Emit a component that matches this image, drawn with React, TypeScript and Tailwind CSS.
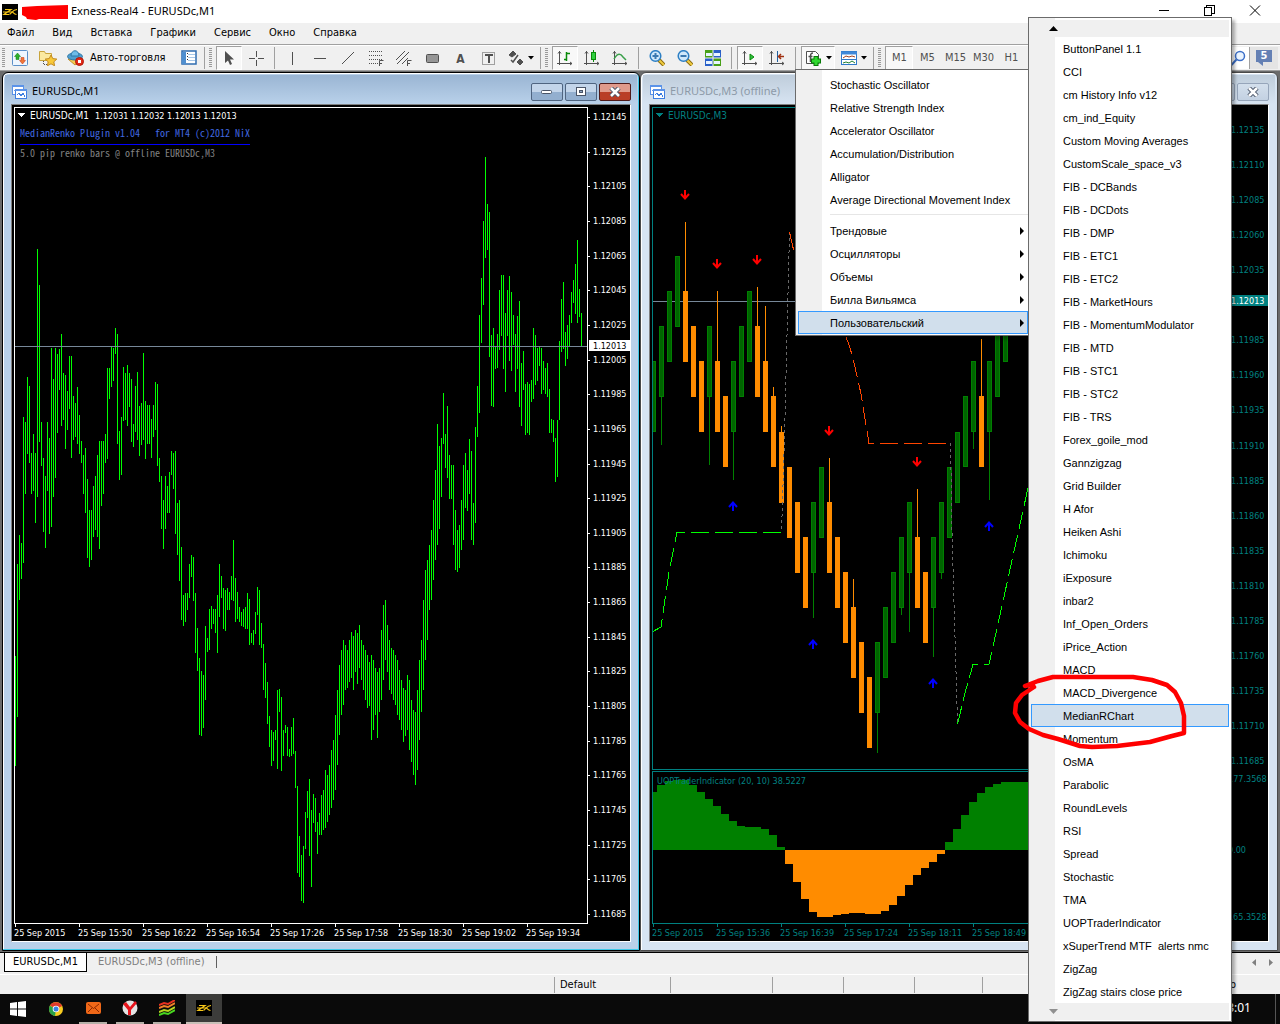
import React from 'react';
import clsx from 'clsx';

const UI = "font-['DejaVu_Sans_Condensed',sans-serif]";
const TITLE = "font-['Noto_Sans',sans-serif]";
const MENU = "font-['Liberation_Sans',sans-serif]";

const menuBar = ['Файл', 'Вид', 'Вставка', 'Графики', 'Сервис', 'Окно', 'Справка'];

const indicators = [
  'Stochastic Oscillator',
  'Relative Strength Index',
  'Accelerator Oscillator',
  'Accumulation/Distribution',
  'Alligator',
  'Average Directional Movement Index',
];

const groups = ['Трендовые', 'Осцилляторы', 'Объемы', 'Билла Вильямса', 'Пользовательский'];

const custom = [
  'ButtonPanel 1.1', 'CCI', 'cm History Info v12', 'cm_ind_Equity', 'Custom Moving Averages',
  'CustomScale_space_v3', 'FIB - DCBands', 'FIB - DCDots', 'FIB - DMP', 'FIB - ETC1', 'FIB - ETC2',
  'FIB - MarketHours', 'FIB - MomentumModulator', 'FIB - MTD', 'FIB - STC1', 'FIB - STC2', 'FIB - TRS',
  'Forex_goile_mod', 'Gannzigzag', 'Grid Builder', 'H Afor', 'Heiken Ashi', 'Ichimoku', 'iExposure',
  'inbar2', 'Inf_Open_Orders', 'iPrice_Action', 'MACD', 'MACD_Divergence', 'MedianRChart', 'Momentum',
  'OsMA', 'Parabolic', 'RoundLevels', 'RSI', 'Spread', 'Stochastic', 'TMA', 'UOPTraderIndicator',
  'xSuperTrend MTF  alerts nmc', 'ZigZag', 'ZigZag stairs close price',
];

// high/low of every M1 bar, two pixels apart
const m1Bars = `656-766 564-717 535-600 543-579 417-563 422-494 377-454 386-463 453-494 434-491 453-523 249-497
285-442 422-466 458-532 476-548 422-491 438-534 348-527 379-497 348-478 354-433 349-390 334-426 373-420 375-449
391-430 356-409 356-458 396-440 403-437 387-444 415-454 441-463 455-494 448-513 479-558 510-567 510-560 486-537
476-530 455-537 441-549 441-506 441-494 434-463 368-459 368-399 346-387 348-381 328-354 334-444 431-480 417-475
367-421 373-420 365-426 373-407 379-442 424-447 386-432 372-440 406-456 403-445 353-440 401-459 405-444 405-444
419-458 405-437 382-430 384-466 458-482 476-529 500-549 476-529 486-513 472-513 451-475 453-489 451-534 503-555
500-581 547-620 595-626 593-622 593-610 564-598 555-577 557-601 593-653 628-671 658-735 671-736 675-728 626-700
638-652 609-650 606-629 609-624 609-633 595-653 564-617 576-598 588-629 590-631 588-610 592-610 576-600 540-601
578-622 592-619 607-622 612-626 609-627 607-629 593-629 599-645 633-643 630-645 612-634 587-615 590-645 623-648
644-690 663-698 682-724 716-747 730-766 732-761 730-740 690-769 689-712 697-771 730-756 725-733 727-756 749-757
727-756 718-754 751-788 786-873 836-877 855-901 846-903 812-849 791-818 779-856 810-887 794-823 798-832 822-854
813-835 795-835 790-830 770-828 775-822 765-815 750-808 740-800 715-790 690-765 665-735 650-715 640-705 645-690
650-688 640-682 632-678 636-690 630-672 633-684 625-668 640-680 645-690 650-700 655-708 662-706 655-740 660-730
668-715 672-738 668-712 630-700 605-680 600-660 625-672 640-690 648-694 650-700 655-705 660-715 670-720 680-730
688-742 690-736 675-730 680-750 700-762 710-775 712-785 690-770 660-740 640-712 600-690 570-660 560-640 545-610
530-600 500-580 470-560 424-545 446-529 438-497 393-444 434-468 406-478 455-499 465-499 465-545 510-570 530-572
525-568 500-550 465-540 453-508 470-511 439-494 451-540 503-545 427-523 386-437 315-413 278-343 221-305 157-258
204-250 212-357 335-406 328-407 346-369 334-368 290-350 275-336 275-369 313-392 290-336 276-361 292-371 315-345
334-392 316-369 301-407 363-426 351-390 384-435 382-433 384-435 380-402 328-399 335-385 348-381 346-366 348-394
361-390 368-394 363-397 389-433 419-433 420-442 438-482 420-477 341-420 299-352 282-349 332-366 325-359 315-347
292-323 280-303 264-314 240-323 289-317 313-347`
  .split(/\s+/)
  .map((bar) => bar.split('-').map(Number));

// renko bricks: [direction, level, wick top, wick bottom]
const bricks: [string, number, number?, number?][] = [
  ['u', 3], ['u', 2, 0, 445], ['u', 1], ['u', 0], ['d', 1, 222], ['d', 2], ['d', 3], ['u', 2, 0, 465],
  ['d', 3, 291], ['d', 4], ['u', 3, 0, 480], ['u', 2], ['u', 1], ['d', 2, 287], ['d', 3, 306],
  ['d', 4, 387], ['d', 5, 426], ['d', 6], ['d', 7], ['d', 8], ['u', 7, 0, 618], ['u', 6],
  ['d', 7, 458], ['d', 8], ['d', 9], ['d', 10, 579], ['d', 11], ['d', 12], ['u', 11, 0, 753],
  ['u', 10], ['u', 9], ['u', 8, 0, 615], ['u', 7, 0, 632], ['d', 8, 489], ['d', 9], ['u', 8, 0, 657],
  ['u', 7, 0, 579], ['u', 6], ['u', 5], ['u', 4], ['u', 3, 0, 449], ['d', 4, 339], ['u', 3, 0, 500],
  ['u', 2], ['u', 1], ['u', 0], ['u', 0],
];

const histogram = [
  792, 785, 781, 780, 780, 785, 792, 799, 806, 814, 821, 826, 827, 827, 829, 835, 847, 864, 882, 899, 912,
  917, 917, 915, 914, 913, 913, 914, 914, 911, 905, 896, 885, 875, 868, 862, 854, 842, 829, 815, 802, 793,
  787, 784, 782, 782, 782, 782,
];

const m1Times = ['2015', '15:50', '16:22', '16:54', '17:26', '17:58', '18:30', '19:02', '19:34'];
const m3Times = ['2015', '15:36', '16:39', '17:24', '18:11', '18:49'];

const sells = [[685, 195], [717, 264], [757, 260], [829, 431], [917, 462]];
const buys = [[733, 506], [813, 644], [933, 683], [989, 526]];

const price = (value: number) => (value / 100000).toFixed(5);

const ChartM1 = () => (
  <svg className={clsx('block w-full flex-1 bg-black text-[9px]', UI)} shapeRendering="crispEdges">
    <g transform="translate(-12 -105)">
      {m1Bars.map(([high, low], i) => (
        <rect key={i} x={15 + i * 2} y={high} width="1" height={low - high} fill="#00ff00" />
      ))}
      <path d="M14 346.5H588" stroke="#778899" />
      <path d="M14.5 923.5V107.5H587.5V923.5Z" fill="none" stroke="#fff" />
      <g fill="#fff">
        {Array.from({ length: 24 }, (_, i) => {
          const y = Math.round(117 + i * 34.65);
          return (
            <React.Fragment key={i}>
              <rect x="588" y={y} width="2" height="1" />
              <text x="593" y={y + 3}>{price(112145 - i * 20)}</text>
            </React.Fragment>
          );
        })}
        {m1Times.map((time, i) => (
          <React.Fragment key={time}>
            <rect x={15 + i * 64} y="924" width="1" height="3" />
            <text x={14 + i * 64} y="936">25 Sep {time}</text>
          </React.Fragment>
        ))}
        <rect x="589" y="340" width="42" height="11" />
        <path d="M18 113h7l-3.500 4z" />
        <text x="30" y="119" className="text-[10px]">EURUSDc,M1</text>
        <text x="95" y="119" className="whitespace-pre">1.12031 1.12032 1.12013 1.12013</text>
      </g>
      <text x="593" y="349" fill="#000">1.12013</text>
      <g className="font-['Noto_Sans_Mono_CJK_SC',monospace] text-[10px]">
        <text x="20" y="137" fill="#4169e1" className="whitespace-pre">
          {'MedianRenko Plugin v1.04   for MT4 (c)2012 NiX'}
        </text>
        <text x="20" y="157" fill="#808080">5.0 pip renko bars @ offline EURUSDc,M3</text>
      </g>
      <rect x="20" y="144" width="230" height="1" fill="#0000ff" />
    </g>
  </svg>
);

const ChartM3 = () => (
  <svg className={clsx('block w-full flex-1 bg-black text-[9px]', UI)} shapeRendering="crispEdges">
    <g transform="translate(-650 -105)">
      <path d="M652 301.500H1228" stroke="#778899" />
      {bricks.map(([dir, level, top, bottom], i) => {
        const x = 653 + i * 8;
        const y = Math.round(256 + level * 35.1);
        const up = dir === 'u';
        return (
          <g key={i} fill={up ? '#008000' : '#ff8c00'}>
            {top ? <rect x={x} y={top} width="1" height={y - top} /> : null}
            {bottom ? <rect x={x} y={y} width="1" height={bottom - y} /> : null}
            <rect x={x - 2} y={y} width="5" height="71" />
            {up && <rect x={x - 1} y={y + 1} width="3" height="69" fill="#006400" />}
          </g>
        );
      })}
      <rect x="650" y="350" width="2" height="90" fill="#000" />
      <g fill="none">
        <path d="M789.500 232L784.500 438L781.500 532M950.500 443L952 532L957.500 724" stroke="#696969" strokeDasharray="3 3" />
        <path d="M789.500 232L794 252L800 270M846 337L849 345L853 358L861 394L869 443.500H950" stroke="#ff4500" strokeDasharray="18 6" />
        <path d="M652 632L661 627L669 572L677 532.500H782M957.500 724L965 693L973 664.500H989L1028 488" stroke="#00ff00" strokeDasharray="18 6" />
      </g>
      <g shapeRendering="auto" strokeWidth="2" fill="none">
        {sells.map(([x, y]) => (
          <path key={x} d={`M${x} ${y - 5}v9M${x - 4} ${y - 1}l4 4.500l4 -4.500`} stroke="#ff0000" />
        ))}
        {buys.map(([x, y]) => (
          <path key={x} d={`M${x} ${y + 5}v-9M${x - 4} ${y + 1}l4 -4.500l4 4.500`} stroke="#0000ff" />
        ))}
      </g>
      {histogram.map((y, i) => (
        <rect
          key={i}
          x={649 + i * 8}
          y={Math.min(y, 850)}
          width="8"
          height={Math.abs(850 - y)}
          fill={y < 850 ? '#008000' : '#ff8c00'}
        />
      ))}
      <rect x="649" y="772" width="3" height="150" fill="#000" />
      <g fill="none" stroke="#008080">
        <path d="M652.500 769.500V107.500H1228.500V769.500Z" />
        <path d="M652.500 923.500V771.500H1228.500V923.500Z" />
      </g>
      <g fill="#008080">
        {Array.from({ length: 19 }, (_, i) =>
          i === 5 ? null : (
            <text key={i} x="1231" y={Math.round(133 + i * 35.060)}>{price(112135 - i * 25)}</text>
          ),
        )}
        <rect x="1230" y="295" width="39" height="11" />
        <text x="1231" y="304" fill="#fff">1.12013</text>
        <text x="1228" y="782">177.3568</text>
        <text x="1228" y="853">0.00</text>
        <text x="1225" y="920">-165.3528</text>
        {m3Times.map((time, i) => (
          <React.Fragment key={time}>
            <rect x={653 + i * 64} y="924" width="1" height="3" />
            <text x={652 + i * 64} y="936">25 Sep {time}</text>
          </React.Fragment>
        ))}
        <path d="M656 113h7l-3.500 4z" />
        <text x="668" y="119" className="text-[10px]">EURUSDc,M3</text>
        <text x="657" y="784">UOPTraderIndicator (20, 10) 38.5227</text>
      </g>
    </g>
  </svg>
);

const ChartIcon = () => (
  <svg width="15" height="14" viewBox="0 0 15 14" shapeRendering="crispEdges">
    <rect x=".5" y=".5" width="11" height="9" fill="#fff" stroke="#5b93e8" />
    <path d="M0 1h12" stroke="#5b93e8" strokeWidth="2" />
    <path d="M2 6l2-2 2 2 2-2" stroke="#5b93e8" fill="none" />
    <rect x="3.500" y="4.500" width="11" height="9" fill="#fff" stroke="#3f7fe0" />
    <path d="M3 5h12" stroke="#5b93e8" strokeWidth="2" />
    <path d="M5 10l2-2 2 3 2-3 2 4" stroke="#3f7fe0" fill="none" />
  </svg>
);

const winButton = 'flex h-[18px] w-8 items-center justify-center rounded-xs border';

const WindowButtons = ({ active }: { active: boolean }) => {
  const tone = active
    ? 'border-[#4f6480] bg-linear-to-b from-[#c3d5ea] from-50% to-[#93afcf] to-50%'
    : 'border-[#96a5ba] bg-linear-to-b from-[#d3dfec] to-[#c3d1e2]';
  return (
    <div className="flex gap-0.5">
      <button className={clsx(winButton, tone)} aria-label="Minimize">
        <svg width="12" height="6" viewBox="0 0 12 6">
          <rect x=".5" y="1.500" width="10" height="3" rx="1" fill="#fff" stroke="#4a5568" />
        </svg>
      </button>
      <button className={clsx(winButton, tone)} aria-label="Maximize">
        <svg width="12" height="10" viewBox="0 0 12 10" shapeRendering="crispEdges">
          <rect x="1.500" y=".5" width="9" height="8" fill="#fff" stroke="#4a5568" />
          <rect x="4.500" y="3.500" width="3" height="2" fill="#8fa6c2" stroke="#4a5568" />
        </svg>
      </button>
      <button
        aria-label="Close"
        className={clsx(
          winButton,
          active ? 'border-[#4f1a1a] bg-linear-to-b from-[#e09a8c] from-50% to-[#b93d27] to-50%' : tone,
        )}
      >
        <svg width="12" height="10" viewBox="0 0 12 10">
          <path d="M2 1l8 8M10 1l-8 8" stroke="#4a5568" strokeWidth="4.500" />
          <path d="M2 1l8 8M10 1l-8 8" stroke="#fff" strokeWidth="2.500" />
        </svg>
      </button>
    </div>
  );
};

type ChartWindowProps = { title: string; active: boolean; children: React.ReactNode };

const ChartWindow = ({ title, active, children }: ChartWindowProps) => (
  <section
    className={clsx(
      'flex min-w-0 flex-1 flex-col rounded-t-md border px-2 pb-2',
      active
        ? 'border-black bg-[#b9d1ea] shadow-[inset_-1px_-1px_0_#3fc8e8,inset_1px_1px_0_#fff]'
        : 'border-[#4a4a4a] bg-[#d7e4f2] shadow-[inset_1px_1px_0_#fff]',
    )}
  >
    <header
      className={clsx(
        '-mx-1.5 mt-0.5 flex h-[29px] items-center bg-linear-to-b px-1.5 pt-1',
        active ? 'from-[#9ab5d3] to-[#b9d1ea]' : 'from-[#bfcddb] to-[#d7e4f2]',
      )}
    >
      <span className="ml-px">
        <ChartIcon />
      </span>
      <h2 className={clsx('ml-[5px] flex-1 text-[11px]', TITLE, active ? 'text-black' : 'text-[#8d9aa8]')}>{title}</h2>
      <WindowButtons active={active} />
    </header>
    <div className="flex flex-1 flex-col border border-t-[#808080] border-r-white border-b-white border-l-[#808080]">
      {children}
    </div>
  </section>
);

type ToolProps = { label: string; pressed?: boolean; className?: string; children: React.ReactNode };

const Tool = ({ label, pressed, className = 'w-7', children }: ToolProps) => (
  <button
    aria-label={label}
    className={clsx(
      'flex h-6 shrink-0 items-center justify-center text-[11px] text-[#505050]',
      pressed && 'border border-t-[#a0a0a0] border-r-white border-b-white border-l-[#a0a0a0] bg-[#f8f8f8]',
      className,
    )}
  >
    {children}
  </button>
);

const Icon = ({ w = 16, children }: { w?: number; children: React.ReactNode }) => (
  <svg width={w} height="16" viewBox={`0 0 ${w} 16`} fill="none" stroke="#505050">
    {children}
  </svg>
);

const Handle = () => (
  <span className="mx-1 h-5 w-[3px] shrink-0 bg-[repeating-linear-gradient(to_bottom,#9a9a9a_0_1px,transparent_1px_2px)]" />
);
const Divider = () => <span className="block h-[22px] w-px shrink-0 bg-[#a0a0a0]" />;

const Axes = () => <path d="M2.500 1v14M0 13.500h15M1 3.500l1.500-2 1.500 2M13 12l2 1.500-2 1.500" />;

const Lens = ({ plus }: { plus?: boolean }) => (
  <Icon>
    <path d="M10 10l5 5" stroke="#8a6a10" strokeWidth="4" />
    <path d="M10 10l5 5" stroke="#f0cc40" strokeWidth="2" />
    <circle cx="6.500" cy="6" r="5.300" fill="#cfe8fb" stroke="#2d7fc4" strokeWidth="1.500" />
    <path d={plus ? 'M3.500 6h6M6.500 3v6' : 'M3.500 6h6'} stroke="#3a78b0" strokeWidth="2" />
  </Icon>
);

const Caret = () => (
  <svg width="6" height="4" viewBox="0 0 6 4" className="ml-1">
    <path d="M0 0h6l-3 3.500z" fill="#000" />
  </svg>
);

const Toolbar = () => (
  <div className={clsx('flex h-[25px] items-center overflow-hidden border-t border-white bg-[#f0f0f0]', UI)}>
    <span className="ml-0.5 h-5 w-[3px] shrink-0 bg-[repeating-linear-gradient(to_bottom,#9a9a9a_0_1px,transparent_1px_2px)]" />
    <Tool label="Новый ордер" className="ml-0.5 w-[26px]">
      <Icon>
        <rect x=".5" y=".5" width="15" height="15" rx="1" fill="#eef6ff" stroke="#5b8fc8" />
        <path d="M5.500 3l3 3.500h-1.500v3h-3v-3h-1.500z" fill="#2cb02c" stroke="#0a7a0a" strokeWidth=".5" />
        <path d="M10.500 14l3-3.500h-1.500v-3h-3v3h-1.500z" fill="#f07838" stroke="#c83010" strokeWidth=".5" />
      </Icon>
    </Tool>
    <Tool label="Избранное" className="w-[29px]">
      <Icon w={18}>
        <path d="M.5 1.500h5l1 2h6v7h-12z" fill="#fbe9a0" stroke="#c8a43c" />
        <path d="M4.500 11v4M5 14.500h3" strokeDasharray="1 1" />
        <path d="M12 5l1.800 3.600 4 .5-3 2.700.8 4-3.600-2-3.600 2 .8-4-3-2.700 4-.5z" fill="#f8c838" stroke="#c08820" />
      </Icon>
    </Tool>
    <button className="flex h-6 shrink-0 items-center gap-1.5 pl-[5px] text-[11px] whitespace-nowrap text-black">
      <Icon w={17}>
        <path d="M1 9l7 6 7-6z" fill="#f5cc50" stroke="#c09030" />
        <ellipse cx="8" cy="6.500" rx="7.500" ry="3.500" fill="#4f9fd0" stroke="#2f78a8" />
        <path d="M4 6c0-7 8-7 8 0z" fill="#6fbce8" stroke="#2f78a8" />
        <circle cx="12.500" cy="11.500" r="4" fill="#e02818" stroke="#b01808" />
        <rect x="11" y="10" width="3" height="3" fill="#fff" stroke="none" />
      </Icon>
      Авто-торговля
    </button>
    <Tool label="Окно данных" className="ml-2 w-[31px]">
      <Icon>
        <rect x="1" y="1" width="14" height="13" fill="#fff" stroke="#2f6cb0" strokeWidth="1.500" />
        <rect x="1" y="2" width="4" height="12" fill="#4f8fd0" stroke="none" />
        <path d="M7 4.500h7M7 7.500h7M7 10.500h7" stroke="#a8c8e8" />
        <path d="M6.500 3v9" stroke="#303030" strokeDasharray="1 2" />
      </Icon>
    </Tool>
    <Divider />
    <Handle />
    <Tool label="Курсор" pressed className="w-[26px]">
      <Icon>
        <path d="M4 1v12l3-2.500 2 4.500 2-1-2-4.500h4z" fill="#505050" stroke="none" />
      </Icon>
    </Tool>
    <Tool label="Перекрестие">
      <Icon>
        <path d="M8.500 1v6M8.500 10v6M1 8.500h6M10 8.500h6" />
      </Icon>
    </Tool>
    <span className="ml-1">
      <Divider />
    </span>
    <Tool label="Вертикальная линия" className="ml-[3px] w-7">
      <Icon><path d="M8.500 2v13" /></Icon>
    </Tool>
    <Tool label="Горизонтальная линия">
      <Icon><path d="M2 8.500h12" /></Icon>
    </Tool>
    <Tool label="Трендовая линия">
      <Icon><path d="M2 14L14 2" /></Icon>
    </Tool>
    <Tool label="Фибоначчи">
      <Icon>
        <path d="M1 1.500h14M1 5.500h14M1 9.500h14M1 13.500h9" strokeDasharray="1 1" />
        <path d="M11.500 16v-5.500h4M11 13.500h3" />
      </Icon>
    </Tool>
    <Tool label="Канал">
      <Icon>
        <path d="M0 10L9 1M1 14L13 2M6 14L12 8" />
        <path d="M11.500 16v-5.500h4M11 13.500h3" />
      </Icon>
    </Tool>
    <Tool label="Прямоугольник">
      <Icon><rect x="2.500" y="4.500" width="12" height="8" rx="1" fill="#969696" /></Icon>
    </Tool>
    <Tool label="Текст" className="w-7 pt-0.5">
      <span className="text-[12px] font-bold">A</span>
    </Tool>
    <Tool label="Метка">
      <Icon>
        <rect x="2.500" y="2.500" width="12" height="12" strokeDasharray="1 1" />
        <path d="M5 5h8M9 5v8" strokeWidth="2" />
      </Icon>
    </Tool>
    <Tool label="Стрелки" className="w-[38px]">
      <Icon>
        <path d="M1 5l4-4 3 3-4 3zM9 12l3-3 3 3-3 3z" fill="#505050" />
        <path d="M3 10l2 2 5-7" strokeWidth="1.500" />
      </Icon>
      <Caret />
    </Tool>
    <Divider />
    <Handle />
    <Tool label="Бары" pressed className="w-[26px]">
      <Icon>
        <Axes />
        <path d="M9.500 2v9M7 9.500h2M10 3.500h3" stroke="#0a8a0a" strokeWidth="1.500" />
      </Icon>
    </Tool>
    <Tool label="Свечи">
      <Icon>
        <Axes />
        <path d="M9.500 0v12" stroke="#0a8a0a" />
        <rect x="7.500" y="2.500" width="4" height="7" fill="#30d040" stroke="#0a8a0a" />
      </Icon>
    </Tool>
    <Tool label="Линия">
      <Icon>
        <Axes />
        <path d="M2 9c4-7 7-5 9-2l3 3" stroke="#3aa04a" strokeWidth="1.500" />
      </Icon>
    </Tool>
    <span className="ml-1">
      <Divider />
    </span>
    <Tool label="Увеличить" className="ml-1 w-7"><Lens plus /></Tool>
    <Tool label="Уменьшить"><Lens /></Tool>
    <Tool label="Расположить окна">
      <Icon>
        <rect width="7.500" height="7.500" fill="#48a018" stroke="none" />
        <rect x="8.500" width="7.500" height="7.500" fill="#2a60c8" stroke="none" />
        <rect y="8.500" width="7.500" height="7.500" fill="#2a60c8" stroke="none" />
        <rect x="8.500" y="8.500" width="7.500" height="7.500" fill="#48a018" stroke="none" />
        <path d="M1 4.500h6M9 4.500h6M1 12.500h6M9 12.500h6" stroke="#e8f4ff" strokeWidth="3" />
      </Icon>
    </Tool>
    <span className="ml-1">
      <Divider />
    </span>
    <Tool label="Автопрокрутка" pressed className="ml-[5px] w-[26px]">
      <Icon>
        <Axes />
        <path d="M8 4v6l4-3z" fill="#30c040" stroke="#0a8a0a" />
      </Icon>
    </Tool>
    <Tool label="Сдвиг графика">
      <Icon>
        <Axes />
        <path d="M8.500 1v11" stroke="#2060a0" />
        <path d="M15 6.500h-5M12 4l-2.500 2.500L12 9" stroke="#a03010" strokeWidth="1.500" />
      </Icon>
    </Tool>
    <span className="ml-1">
      <Divider />
    </span>
    <Tool label="Индикаторы" pressed className="ml-[5px] w-[34px]">
      <Icon w={17}>
        <path d="M1.500 1.500h9l3 3v9h-12z" fill="#fff" />
        <path d="M8 3c-3 0-2.500 2-2.500 9M3.500 6.500h4" strokeWidth="1.500" />
        <path d="M11 6v10M6 11h10" stroke="#087a08" strokeWidth="5" />
        <path d="M11 7v8M7 11h8" stroke="#30d830" strokeWidth="3" />
      </Icon>
      <Caret />
    </Tool>
    <Tool label="Шаблоны" className="w-[38px]">
      <Icon>
        <rect x=".5" y="1.500" width="15" height="13" fill="#fff" stroke="#2f78c8" />
        <path d="M0 3h16" stroke="#3f88d8" strokeWidth="3" />
        <path d="M2 8l3-2 3 1 3-1 3 1" stroke="#a04020" />
        <path d="M1 9.500h14" stroke="#2f78c8" />
        <path d="M2 13l3-1 3 1 3-2 3 2" stroke="#208030" />
      </Icon>
      <Caret />
    </Tool>
    <Divider />
    <Handle />
    {['M1', 'M5', 'M15', 'M30', 'H1', 'H4'].map((frame) => (
      <Tool key={frame} label={frame} pressed={frame === 'M1'}>
        {frame}
      </Tool>
    ))}
    <div className="ml-auto flex h-6 shrink-0 items-center">
      <span className="flex h-[22px] w-10 items-center justify-end border-r border-[#a0a0a0] bg-white pr-[3px]">
        <Icon>
          <circle cx="10" cy="6" r="4.500" fill="#eaf4ff" stroke="#3c6fc8" strokeWidth="1.500" />
          <path d="M6.500 9.500L1.500 15" stroke="#3c6fc8" strokeWidth="2" />
        </Icon>
      </span>
      <button aria-label="Сообщения" className="mr-0.5 flex h-[22px] w-7 flex-col items-center bg-[#e4e4e4] pt-[3px]">
        <span className="flex h-3 w-4 items-center justify-center bg-[#6480b4] text-[11px] font-bold text-white">5</span>
        <svg width="16" height="4" viewBox="0 0 16 4">
          <path d="M2 0h5v4z" fill="#6480b4" />
        </svg>
      </button>
    </div>
  </div>
);

const menuBox =
  'absolute flex flex-col border border-[#6b6b6b] bg-[linear-gradient(to_right,#f0f0f0_26px,#fff_26px)] px-0.5 pb-px text-[11px] shadow-[3px_3px_3px_rgba(0,0,0,0.3)]';

type MenuItemProps = { label: string; selected?: boolean; arrow?: boolean };

const MenuItem = ({ label, selected, arrow }: MenuItemProps) => (
  <button
    role="menuitem"
    className={clsx(
      'flex h-[23px] shrink-0 items-center border pl-[31px] text-left whitespace-pre',
      selected ? 'border-[#3399ff] bg-[#d1dfec]' : 'border-transparent',
    )}
  >
    <span className="flex-1 pt-px">{label}</span>
    {arrow && (
      <svg width="5" height="8" viewBox="0 0 5 8" className="mr-0.5">
        <path d="M0 0v8l4-4z" />
      </svg>
    )}
  </button>
);

const Logo = () => (
  <svg width="16" height="16" viewBox="0 0 16 16" fill="none" stroke="#f5c518">
    <rect width="16" height="16" fill="#000" stroke="none" />
    <path d="M3 5.500h6L2 10.500h5M1 8h9" strokeWidth="1.200" />
    <path d="M15 5.500c-4 0-4.500 2.500-7.500 5M10 8c1.500 0 1.500 2.500 4.500 2.500" strokeWidth="1.200" />
  </svg>
);

const TitleBar = () => (
  <header className="flex h-[23px] items-center bg-white pl-0.5">
    <Logo />
    <svg width="48" height="16" viewBox="0 0 48 16" className="ml-1">
      <path d="M0 3l15-1 31-1v14H17l-3 1-9-1-1-2-4-2z" fill="#ff0000" />
    </svg>
    <h1 className={clsx('ml-px flex-1 text-[11px] text-black', TITLE)}>Exness-Real4 - EURUSDc,M1</h1>
    <div className="mr-[19px] flex items-center gap-[34px] pb-[3px]">
      <button aria-label="Свернуть">
        <svg width="11" height="11" viewBox="0 0 11 11"><path d="M0 5.500h10" stroke="#000" /></svg>
      </button>
      <button aria-label="Восстановить">
        <svg width="11" height="11" viewBox="0 0 11 11" fill="none" stroke="#000" shapeRendering="crispEdges">
          <path d="M.5 2.500h7v8h-7zM2.500 2V.5h8v8H8" />
        </svg>
      </button>
      <button aria-label="Закрыть">
        <svg width="12" height="11" viewBox="0 0 12 11"><path d="M1 .5l10 10M11 .5l-10 10" stroke="#000" /></svg>
      </button>
    </div>
  </header>
);

const taskSlot = 'flex h-full items-center justify-center border-b-2';

const Taskbar = () => (
  <footer className="flex h-[30px] items-stretch bg-[#0a0a0a]">
    <button aria-label="Пуск" className="flex w-9 items-center justify-center">
      <svg width="16" height="16" viewBox="0 0 16 16" fill="#fff">
        <path d="M0 2l7-1v6.500H0zM8 1l8-1v7.500H8zM0 8.500h7V15l-7-1zM8 8.500h8V16l-8-1z" />
      </svg>
    </button>
    <button aria-label="Chrome" className="ml-0.5 flex w-9 items-center justify-center">
      <svg width="14" height="14" viewBox="0 0 14 14">
        <circle cx="7" cy="7" r="7" fill="#f8cc20" />
        <path d="M7 7L1 3.500A7 7 0 0 1 13.200 4z" fill="#e03a2c" />
        <path d="M7 7L.8 3.800A7 7 0 0 0 6 14z" fill="#28a048" />
        <circle cx="7" cy="7" r="3.300" fill="#fff" />
        <circle cx="7" cy="7" r="2.500" fill="#3a80e0" />
      </svg>
    </button>
    <button aria-label="Почта" className={clsx(taskSlot, 'ml-[5px] w-7 border-[#b5b0a8]')}>
      <svg width="15" height="12" viewBox="0 0 15 12" fill="none" stroke="#8a2800">
        <rect width="15" height="12" rx="2" fill="#f06818" stroke="none" />
        <path d="M2 2l5.500 4.500L13 2M2 10l4-4M13 10L9 6" />
      </svg>
    </button>
    <button aria-label="Яндекс" className={clsx(taskSlot, 'ml-[9px] w-7 border-[#b5b0a8]')}>
      <svg width="16" height="16" viewBox="0 0 16 16">
        <circle cx="8" cy="8" r="7.500" fill="#e4e4e4" />
        <path d="M1 4l5 6v5h3v-5l6-7-2-2-5 6-4-5z" fill="#e8141c" />
      </svg>
    </button>
    <button aria-label="График" className={clsx(taskSlot, 'ml-[9px] w-7 border-[#b5b0a8]')}>
      <svg width="16" height="16" viewBox="0 0 16 16" fill="none" strokeWidth="2">
        <path d="M0 5l5-2 4 1 7-4" stroke="#e83020" />
        <path d="M0 8l5-2 4 1 7-4" stroke="#f08028" />
        <path d="M0 12l5-2 4 1 7-4" stroke="#b8d820" />
        <path d="M0 15l5-2 4 1 7-4" stroke="#48d820" />
      </svg>
    </button>
    <button aria-label="Exness" className={clsx(taskSlot, 'ml-[5px] w-9 border-[#c8c0b8] bg-[#3c3c3a]')}>
      <Logo />
    </button>
    <time className={clsx('mr-6 ml-auto flex items-center pb-0.5 text-[12px] text-white', TITLE)}>23:01</time>
    <span className="mr-1 w-px bg-[#555]" />
  </footer>
);

const App: React.FC = () => (
  <div className="relative flex min-h-screen flex-col overflow-hidden bg-[#f0f0f0] text-black">
    <TitleBar />
    <nav className={clsx('flex h-[22px] items-start border-b border-[#a0a0a0] pt-px pl-[7px] text-[11px]', UI)}>
      <div className="flex gap-[18px]">
        {menuBar.map((item) => (
          <button key={item} className="h-[18px]">{item}</button>
        ))}
      </div>
    </nav>
    <Toolbar />

    <main className="flex flex-1 border-t border-t-[#a0a0a0] bg-[#6b6b6b] px-0.5 pt-px pb-px">
      <ChartWindow title="EURUSDc,M1" active>
        <ChartM1 />
      </ChartWindow>
      <ChartWindow title="EURUSDc,M3 (offline)" active={false}>
        <ChartM3 />
      </ChartWindow>
    </main>

    <div className={clsx('flex h-[22px] items-start border-t border-black bg-[#f0f0f0] pl-1 text-[11px]', UI)}>
      <button className="h-[19px] border border-t-0 border-black bg-white px-2">EURUSDc,M1</button>
      <button className="h-[19px] px-[11px] text-[#808080]">EURUSDc,M3 (offline)</button>
      <span className="mt-[3px] h-3 w-px bg-[#606060]" />
      <div className="mt-1.5 mr-1.5 ml-auto flex gap-3">
        <svg width="5" height="7" viewBox="0 0 5 7"><path d="M4 0v7L0 3.500z" fill="#808080" /></svg>
        <svg width="5" height="7" viewBox="0 0 5 7"><path d="M0 0v7l4-3.500z" fill="#808080" /></svg>
      </div>
    </div>

    <div
      className={clsx(
        'grid h-5 grid-cols-[554px_116px_102px_71px_71px_68px_1fr] items-center border-t border-white text-[11px] [&>span]:h-4 [&>span]:border-l [&>span]:border-[#a0a0a0]',
        UI,
      )}
    >
      <div />
      <span className="pl-[5px]">Default</span>
      <span />
      <span />
      <span />
      <span />
      <span className="pr-11 text-right">1432/3 kb</span>
    </div>

    <Taskbar />

    <div role="menu" className={clsx(menuBox, 'top-[69px] left-[795px] w-[236px] pt-[3px]', MENU)}>
      {indicators.map((label) => (
        <MenuItem key={label} label={label} />
      ))}
      <hr className="mt-[3px] mb-1 ml-8 border-t border-[#e6e6e6]" />
      {groups.map((label) => (
        <MenuItem key={label} label={label} arrow selected={label === 'Пользовательский'} />
      ))}
    </div>

    <div role="menu" className={clsx(menuBox, 'top-[17px] left-[1028px] w-[204px] pt-0.5', MENU)}>
      <button aria-label="Вверх" className="flex h-[17px] items-center bg-[#f0f0f0] pl-[18px]">
        <svg width="9" height="5" viewBox="0 0 9 5"><path d="M0 5h9L4.500 0z" /></svg>
      </button>
      {custom.map((label) => (
        <MenuItem key={label} label={label} selected={label === 'MedianRChart'} />
      ))}
      <button aria-label="Вниз" className="flex h-[17px] items-center bg-[#f0f0f0] pl-[18px]">
        <svg width="9" height="5" viewBox="0 0 9 5"><path d="M0 0h9L4.500 5z" fill="#909090" /></svg>
      </button>
    </div>

    {/* hand-drawn marker around the selected entry */}
    <svg
      className="pointer-events-none absolute top-[670px] left-[1010px]"
      width="180"
      height="84"
      viewBox="1010 670 180 84"
      fill="none"
      stroke="#ff0000"
      strokeWidth="4.500"
      strokeLinejoin="round"
      strokeLinecap="round"
    >
      <path d="M1034 687L1022 695L1016 703L1015 713L1020 722L1029 729L1043 735L1058 739L1080 746L1092 747L1117 746L1150 742L1172 736L1184 733V716L1181 703L1175 692L1167 685L1152 680L1133 677H1053L1038 681L1025 686L1033 684" />
    </svg>
  </div>
);

export default App;
